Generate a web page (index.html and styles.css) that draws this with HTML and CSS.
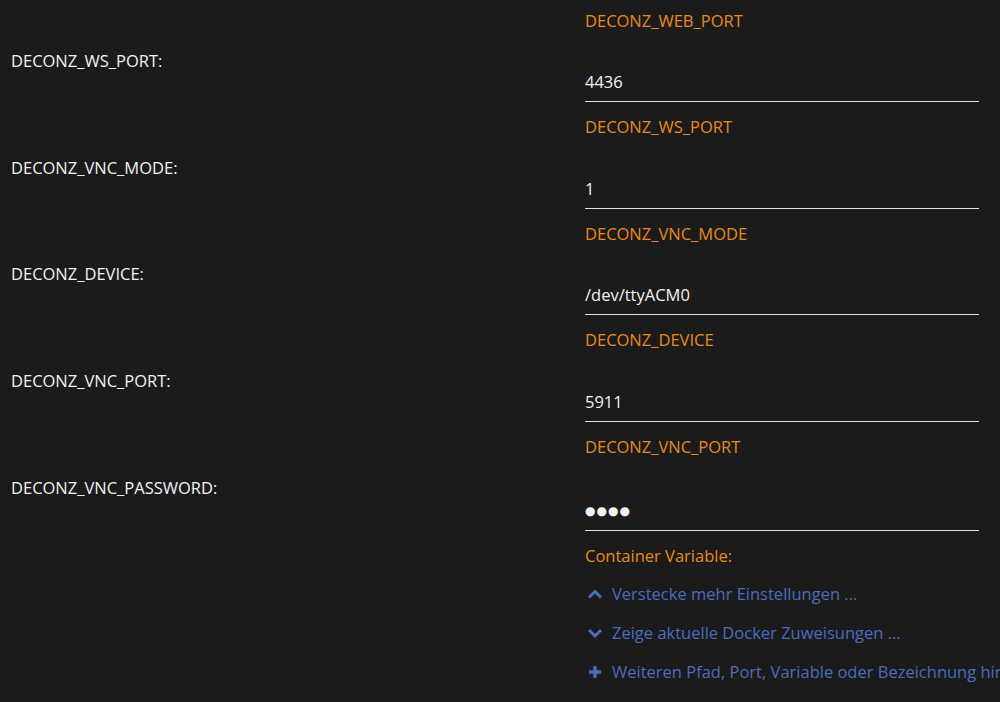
FILE: index.html
```html
<!DOCTYPE html>
<html lang="de">
<head>
  <meta charset="UTF-8" />
  <title>deCONZ Container</title>
  <link rel="stylesheet" href="styles.css">
</head>
<body>

  <div class="form">
    <!-- tail of the DECONZ_WEB_PORT row, scrolled above -->
    <div class="row top">
      <div class="label"></div>
      <div class="field">
        <div class="help">DECONZ_WEB_PORT</div>
      </div>
    </div>

    <div class="row">
      <div class="label">DECONZ_WS_PORT:</div>
      <div class="field">
        <div class="input">4436</div>
        <div class="help">DECONZ_WS_PORT</div>
      </div>
    </div>

    <div class="row">
      <div class="label">DECONZ_VNC_MODE:</div>
      <div class="field">
        <div class="input">1</div>
        <div class="help">DECONZ_VNC_MODE</div>
      </div>
    </div>

    <div class="row">
      <div class="label">DECONZ_DEVICE:</div>
      <div class="field">
        <div class="input">/dev/ttyACM0</div>
        <div class="help">DECONZ_DEVICE</div>
      </div>
    </div>

    <div class="row">
      <div class="label">DECONZ_VNC_PORT:</div>
      <div class="field">
        <div class="input">5911</div>
        <div class="help">DECONZ_VNC_PORT</div>
      </div>
    </div>

    <div class="row">
      <div class="label">DECONZ_VNC_PASSWORD:</div>
      <div class="field">
        <div class="input"><span class="password">&#9679;&#9679;&#9679;&#9679;</span></div>
        <div class="help">Container Variable:</div>
      </div>
    </div>

    <!-- toggles -->
    <div class="links">
      <a class="link" href="#">
        <svg viewBox="0 0 16 16" class="icon"><path d="M2 11.5 L8 5.5 L14 11.5" fill="none" stroke="currentColor" stroke-width="3"/></svg>
        <span>Verstecke mehr Einstellungen ...</span>
      </a>
      <a class="link" href="#">
        <svg viewBox="0 0 16 16" class="icon"><path d="M2 5 L8 11 L14 5" fill="none" stroke="currentColor" stroke-width="3"/></svg>
        <span>Zeige aktuelle Docker Zuweisungen ...</span>
      </a>
      <a class="link" href="#">
        <svg viewBox="0 0 16 16" class="icon"><path d="M8 2 V14 M2 8 H14" fill="none" stroke="currentColor" stroke-width="3.4"/></svg>
        <span>Weiteren Pfad, Port, Variable oder Bezeichnung hinzufügen</span>
      </a>
    </div>
  </div>

</body>
</html>
```

FILE: styles.css
```css
* { margin: 0; padding: 0; box-sizing: border-box; }
html, body {
  width: 100%;
  height: 100%;
  overflow: hidden;
  background: #1c1b1b;
  color: #f2f2f2;
  font-family: 'Open Sans', 'Noto Sans', sans-serif;
  font-size: 16.5px;
}

.form {
  white-space: nowrap;
}

.row {
  display: flex;
  height: 106.75px;
}

.row.top {
  height: 41.75px;
  padding-top: 11px;
}

.row.top .help { margin-top: 0; }

.label {
  flex-shrink: 0;
  width: 585px;
  padding: 9px 0 0 11px;
  line-height: 20px;
}

.field {
  flex-shrink: 0;
  width: 394px;
}

.input {
  margin-top: 28px;
  padding: 2px 0 9px;
  line-height: 20px;
  border-bottom: 1px solid #e0e0e0;
}

.password {
  font-family: 'DejaVu Sans', sans-serif;
  font-size: 12px;
  letter-spacing: 1px;
}

.help {
  margin-top: 15px;
  line-height: 20px;
  color: #e68a1e;
}

.links {
  width: 415px;
  margin-left: 585px;
  margin-top: 6px;
  display: flex;
  flex-direction: column;
  gap: 15px;
}

.link {
  display: flex;
  align-items: center;
  gap: 9px;
  overflow: hidden;
  line-height: 24px;
  color: #4a6cbf;
  text-decoration: none;
}

.icon {
  flex-shrink: 0;
  width: 16px;
  height: 16px;
  margin-left: 2px;
}
```
